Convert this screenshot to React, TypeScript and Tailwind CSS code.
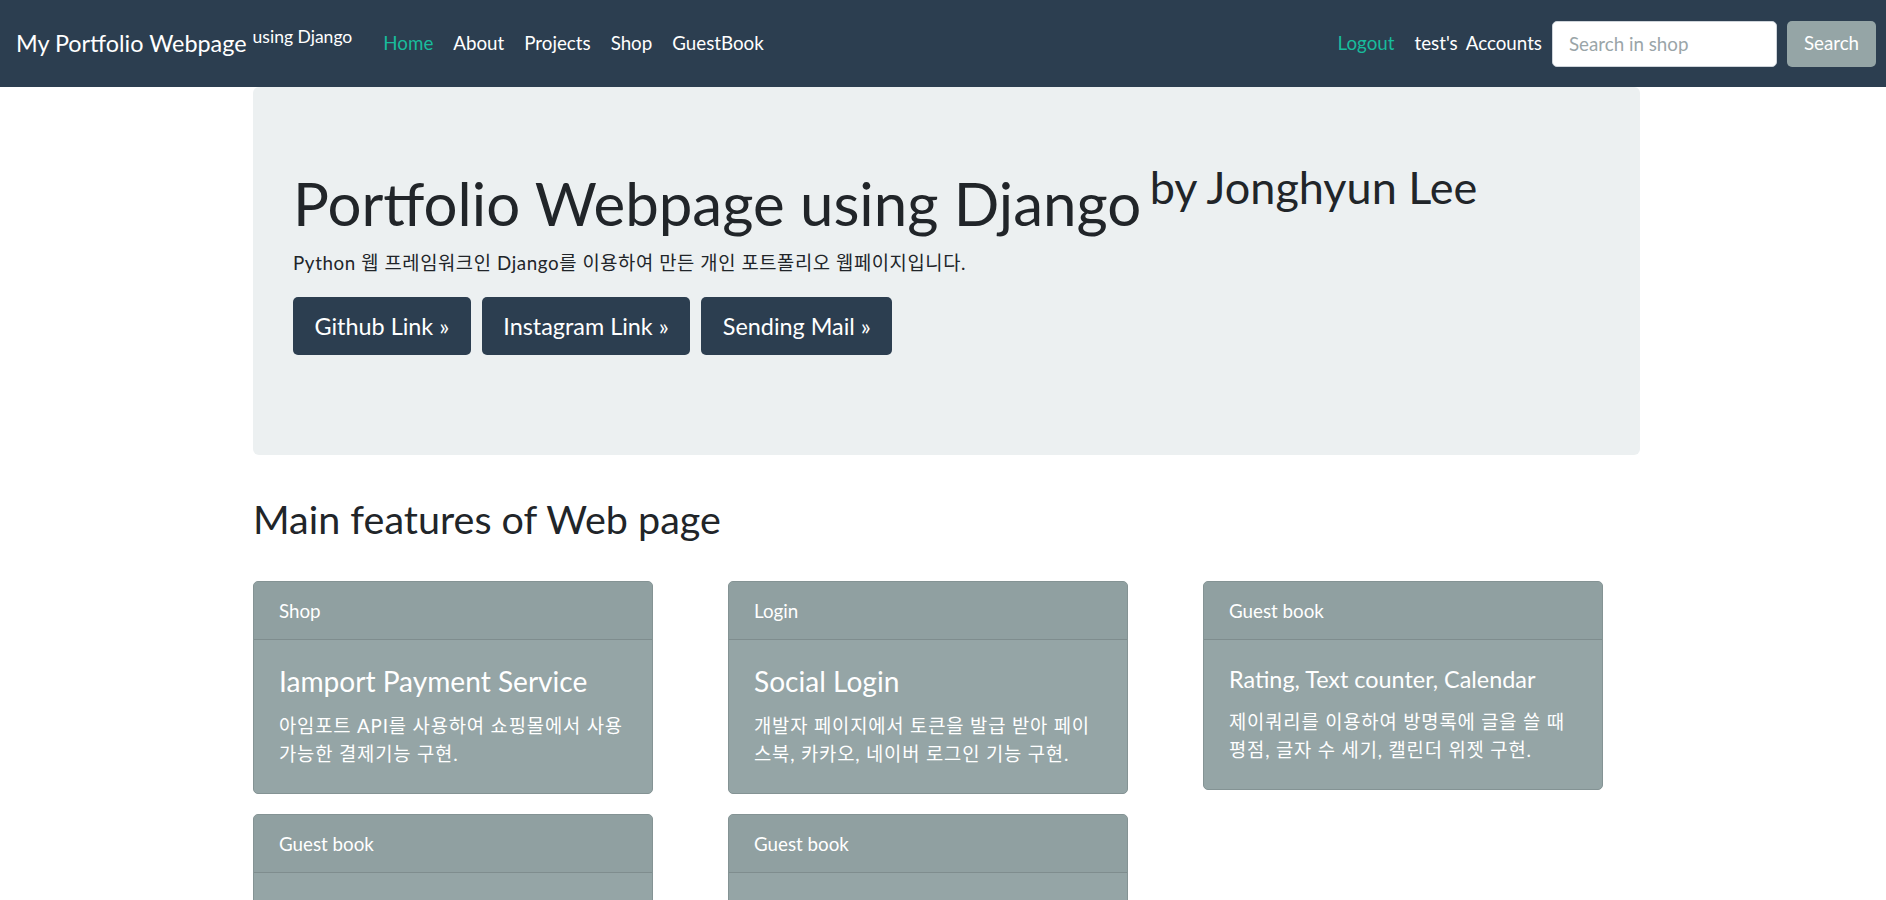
import React from "react";

const FONT = { fontFamily: "Lato, 'Noto Sans CJK KR', 'Noto Sans', sans-serif" };

function Card({ header, title, titleClass, lines }: { header: string; title: string; titleClass: string; lines: string[] }) {
  return (
    <div className="w-[400px] rounded-[5px] border border-[#849394] bg-[#95a5a6] text-white">
      <div className="border-b border-[#7f8d8e] bg-[#90a0a1] px-[25px] py-[14.5px] text-[18.75px] leading-[28px] rounded-t-[4px]">
        {header}
      </div>
      <div className="px-[25px] py-[25px]">
        <div className={titleClass}>{title}</div>
        <p className="text-[18.75px] leading-[28.1px] tracking-[0.85px] whitespace-nowrap">
          {lines.map((l, i) => (
            <React.Fragment key={i}>
              {l}
              {i < lines.length - 1 && <br />}
            </React.Fragment>
          ))}
        </p>
      </div>
    </div>
  );
}

export default function App() {
  return (
    <div style={FONT} className="min-h-screen bg-white text-[#212529]">
      {/* Navbar */}
      <nav className="flex h-[87px] items-center bg-[#2c3e50] pl-[16px] pr-[10px] text-white">
        <div className="whitespace-nowrap text-[23.4px] leading-[35px] mr-[21px]">
          My Portfolio Webpage{" "}
          <span className="relative -top-[0.5em] text-[75%] leading-[0]">using Django</span>
        </div>
        <div className="flex items-center text-[18.75px] leading-[28px] -mt-[2px]">
          <a className="px-[10px] text-[#18bc9c]">Home</a>
          <a className="px-[10px]">About</a>
          <a className="px-[10px]">Projects</a>
          <a className="px-[10px]">Shop</a>
          <a className="px-[10px]">GuestBook</a>
        </div>
        <div className="ml-auto flex items-center">
          <div className="flex items-center text-[18.75px] leading-[28px] -mt-[2px]">
            <a className="px-[10px] text-[#18bc9c]">Logout</a>
            <a className="pl-[10px] pr-[10px] whitespace-nowrap">
              test's<span className="ml-[8px]">Accounts</span>
            </a>
          </div>
          <input
            placeholder="Search in shop"
            className="h-[46px] w-[225px] rounded-[5px] border border-[#ced4da] bg-white px-[16px] text-[18.75px] text-[#495057] placeholder:text-[#9aa5a8] outline-none"
            style={FONT}
          />
          <button className="ml-[10px] h-[46px] w-[89px] rounded-[5px] bg-[#95a5a6] text-[18.75px] text-white">
            Search
          </button>
        </div>
      </nav>

      {/* Main */}
      <main className="pl-[253px] pr-[246px]">
        <section className="rounded-[6px] bg-[#ecf0f1] px-[40px] pt-[80px] pb-[80px]">
          <h1 className="mb-[10px] whitespace-nowrap text-[60px] font-normal leading-[72px]">
            Portfolio Webpage using Django{" "}
            <span className="relative -top-[0.5em] -ml-[7px] text-[75%] leading-[0]">by Jonghyun Lee</span>
          </h1>
          <p className="mb-[20px] text-[18.75px] leading-[28.1px] tracking-[0.6px]">
            Python 웹 프레임워크인 Django를 이용하여 만든 개인 포트폴리오 웹페이지입니다.
          </p>
          <div className="mb-[20px] flex gap-[11px]">
            <a className="flex h-[58px] items-center rounded-[5px] bg-[#2c3e50] px-[21.5px] text-[23.4px] text-white">
              Github Link »
            </a>
            <a className="flex h-[58px] items-center rounded-[5px] bg-[#2c3e50] px-[21.5px] text-[23.4px] text-white">
              Instagram Link »
            </a>
            <a className="flex h-[58px] items-center rounded-[5px] bg-[#2c3e50] px-[21.5px] text-[23.4px] text-white">
              Sending Mail »
            </a>
          </div>
        </section>

        <h3 className="mt-[40px] mb-[38px] text-[39.5px] leading-[48px]">Main features of Web page</h3>

        <div className="grid grid-cols-[400px_400px_400px] items-start gap-x-[75px] gap-y-[20px] pb-[40px]">
          <Card
            header="Shop"
            title="Iamport Payment Service"
            titleClass="mb-[15px] text-[28.1px] leading-[32px]"
            lines={["아임포트 API를 사용하여 쇼핑몰에서 사용", "가능한 결제기능 구현."]}
          />
          <Card
            header="Login"
            title="Social Login"
            titleClass="mb-[15px] text-[28.1px] leading-[32px]"
            lines={["개발자 페이지에서 토큰을 발급 받아 페이", "스북, 카카오, 네이버 로그인 기능 구현."]}
          />
          <Card
            header="Guest book"
            title="Rating, Text counter, Calendar"
            titleClass="mb-[15px] text-[23.4px] leading-[28.1px]"
            lines={["제이쿼리를 이용하여 방명록에 글을 쓸 때", "평점, 글자 수 세기, 캘린더 위젯 구현."]}
          />
          <Card
            header="Guest book"
            title="Summernote Editor"
            titleClass="mb-[15px] text-[28.1px] leading-[32px]"
            lines={["썸머노트 에디터를 이용하여 방명록에", "이미지와 글을 함께 작성하는 기능 구현."]}
          />
          <Card
            header="Guest book"
            title="Comment, Pagination"
            titleClass="mb-[15px] text-[28.1px] leading-[32px]"
            lines={["방명록 글에 댓글을 달고 페이지를", "나누어 보여주는 기능 구현."]}
          />
        </div>
      </main>
    </div>
  );
}
